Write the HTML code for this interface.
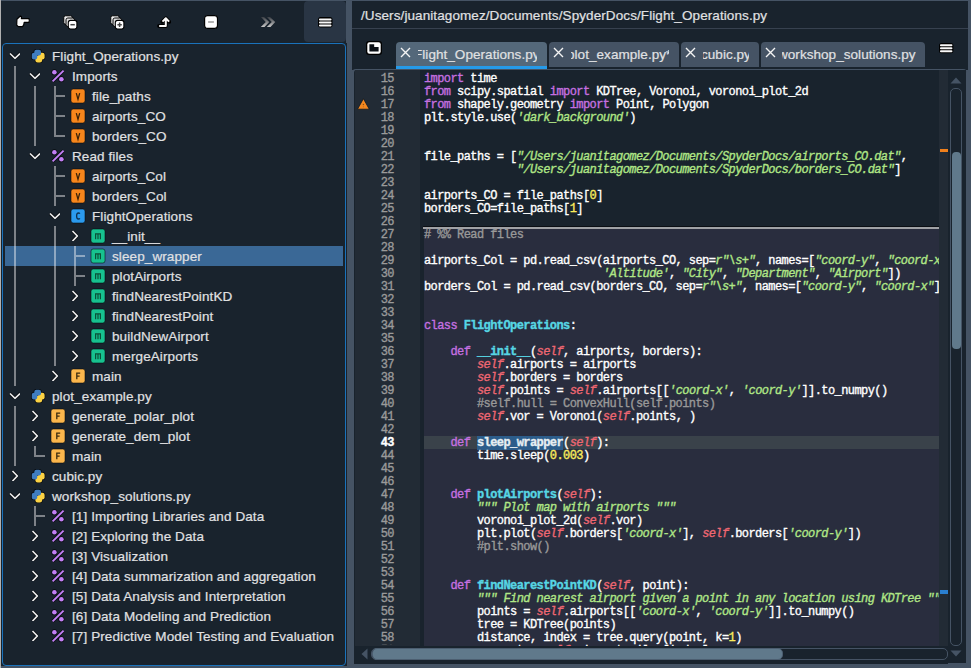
<!DOCTYPE html>
<html><head><meta charset="utf-8"><style>
*{margin:0;padding:0;box-sizing:border-box}
html,body{width:971px;height:668px;overflow:hidden;background:#455364}
.abs{position:absolute}
.abs svg,.tab svg{display:block}
.tt{position:absolute;font:13.5px/21px "Liberation Sans",sans-serif;letter-spacing:0.1px;-webkit-text-stroke:0.2px currentColor;color:#E0E1E3;white-space:pre}
.ln{position:absolute;left:424px;height:13px;font:12px/13px "Liberation Mono",monospace;letter-spacing:-0.58px;color:#ffffff;white-space:pre;padding-top:1px;-webkit-text-stroke:0.35px currentColor}
.gn{position:absolute;left:360px;width:34px;text-align:right;height:13px;font:12px/13px "Liberation Mono",monospace;letter-spacing:-0.58px;color:#9a9a9a;white-space:pre;padding-top:1px;-webkit-text-stroke:0.35px currentColor}
.gn.cur{color:#ffffff;font-weight:bold}
.k{color:#c670e0} .s{color:#b0e686;font-style:italic} .n{color:#faed5c} .i{color:#ee6772;font-style:italic}
.d{color:#57d6e4;font-weight:bold} .c{color:#999999}
.dsel{color:#e6eef2;font-weight:bold;background:#2c5d8b}
.tab{position:absolute;top:42px;height:27px;background:#455364;border-radius:4px 4px 0 0;overflow:hidden}
.tab .x{position:absolute;left:4px;top:4.5px}
.tab .lbl{position:absolute;top:0;height:27px;overflow:hidden;font:13.5px/26px "Liberation Sans",sans-serif;letter-spacing:0.05px;-webkit-text-stroke:0.2px currentColor;color:#E0E1E3;white-space:pre}
</style></head><body>
<!-- left edge -->
<div class="abs" style="left:0;top:0;width:1px;height:668px;background:#b0b0b0"></div>

<!-- ===== LEFT PANE ===== -->
<div class="abs" style="left:1px;top:1px;width:345px;height:42px;background:#19232D"></div>
<div class="abs" style="left:304px;top:1px;width:42px;height:41px;background:#293544;border-radius:4px"></div>

<!-- toolbar icons -->
<div class="abs" style="left:15px;top:15px;width:16px;height:13px">
<svg width="16" height="13" viewBox="0 0 16 13"><path d="M1.9 4.2 L5.3 1 L6.4 1.6 L6.4 3.6 L13.9 3.6 Q14.9 5.5 13.9 7.4 L9.2 7.4 L8.8 9.6 L7.6 11.6 L3.4 11.6 L1.7 10.2 Z" fill="#fafafa" stroke="#000" stroke-width="1.2" stroke-linejoin="round"/></svg></div>

<div class="abs" style="left:63px;top:15px;width:15px;height:15px">
<svg width="15" height="15" viewBox="0 0 15 15">
<rect x="0.8" y="0.8" width="8.5" height="8.5" rx="1.8" fill="#f2f2f2" stroke="#000" stroke-width="1"/>
<rect x="3" y="3" width="8.5" height="8.5" rx="1.8" fill="#dcdcdc" stroke="#000" stroke-width="1"/>
<rect x="5.3" y="5.4" width="8.6" height="8.6" rx="2.2" fill="#fff" stroke="#000" stroke-width="1.1"/>
<path d="M7.4 9.7 H11.8" stroke="#444" stroke-width="1.5"/></svg></div>

<div class="abs" style="left:110px;top:15px;width:15px;height:15px">
<svg width="15" height="15" viewBox="0 0 15 15">
<rect x="0.8" y="0.8" width="8.5" height="8.5" rx="1.8" fill="#f2f2f2" stroke="#000" stroke-width="1"/>
<rect x="3" y="3" width="8.5" height="8.5" rx="1.8" fill="#dcdcdc" stroke="#000" stroke-width="1"/>
<rect x="5.3" y="5.4" width="8.6" height="8.6" rx="2.2" fill="#fff" stroke="#000" stroke-width="1.1"/>
<path d="M7.4 9.7 H11.8 M9.6 7.5 V11.9" stroke="#444" stroke-width="1.5"/></svg></div>

<div class="abs" style="left:157px;top:16px;width:14px;height:13px">
<svg width="14" height="13" viewBox="0 0 14 13"><path d="M2 10 H8.8 V3.5 M5.3 5.8 L8.8 2.2 L12.3 5.8" stroke="#000" stroke-width="3.8" fill="none" stroke-linejoin="round" stroke-linecap="round"/><path d="M2.2 10 H8.8 V3.5 M5.5 5.6 L8.8 2.3 L12.1 5.6" stroke="#fafafa" stroke-width="2" fill="none" stroke-linejoin="round"/></svg></div>

<div class="abs" style="left:204px;top:15px;width:14px;height:14px">
<svg width="14" height="14" viewBox="0 0 14 14"><rect x="0.6" y="0.6" width="12.9" height="12.8" rx="2.8" fill="#fff" stroke="#000" stroke-width="1.2"/><path d="M4.1 7 H9.9" stroke="#9a9a9a" stroke-width="1.5"/></svg></div>

<div class="abs" style="left:260px;top:16px;width:17px;height:12px">
<svg width="17" height="12" viewBox="0 0 17 12"><defs><linearGradient id="gg" x1="0" y1="0" x2="0" y2="1"><stop offset="0" stop-color="#3a3e44"/><stop offset="1" stop-color="#c8c8c8"/></linearGradient></defs>
<path d="M1 1 H4 L9.2 6 L4.5 11 H0.8 L5.8 6 Z M7 1 H10 L15.2 6 L10.5 11 H6.8 L11.8 6 Z" fill="url(#gg)"/></svg></div>

<div class="abs" style="left:317.5px;top:16.5px;width:15px;height:11px">
<svg width="15" height="11" viewBox="0 0 15 11"><rect x="0" y="0" width="14.5" height="10.5" rx="2.5" fill="#000"/><path d="M1.9 2.5 H12.6 M1.9 5.5 H12.6 M1.9 8.5 H12.6" stroke="#fafafa" stroke-width="1.9" stroke-linecap="round"/></svg></div>

<!-- outline frame -->
<div class="abs" style="left:1px;top:43px;width:346px;height:623px;background:#19232D"></div>
<div class="abs" style="left:2px;top:43px;width:344px;height:623px;background:#19232D;border:1px solid #1A72BB;border-radius:4px"></div>
<div class="abs" style="left:5px;top:246px;width:338px;height:20px;background:#3a6896"></div>
<div class="abs" style="left:9px;top:52px;width:12px;height:8px"><svg width="12" height="8" viewBox="-1 -1 12 8" style="margin:-1px"><path d="M1 1.5 L6 6.3 L11 1.5" stroke="rgba(3,5,8,0.85)" stroke-width="3.2" fill="none"/><path d="M1 1.5 L6 6.3 L11 1.5" stroke="#ececec" stroke-width="1.7" fill="none"/></svg></div>
<div class="abs" style="left:30px;top:48px;width:16px;height:16px"><svg width="16" height="16" viewBox="0 0 16 16"><g fill="#070b10" stroke="#070b10" stroke-width="1.4"><rect x="4.3" y="1.8" width="6.7" height="5.6" rx="2"/><rect x="1.8" y="4.8" width="5.4" height="6.6" rx="2"/><rect x="5.4" y="7.7" width="6.7" height="6.7" rx="2.2"/><rect x="8.2" y="4.8" width="6.4" height="6.6" rx="2.2"/></g><g fill="#fbd244"><rect x="5.4" y="7.7" width="6.7" height="6.7" rx="2.2"/><rect x="8.2" y="4.8" width="6.4" height="6.6" rx="2.2"/></g><g fill="#3f7dc0"><rect x="4.3" y="1.8" width="6.7" height="5.6" rx="2"/><rect x="1.8" y="4.8" width="5.4" height="6.6" rx="2"/></g></svg></div>
<div class="tt" style="left:52px;top:46px">Flight_Operations.py</div>
<div class="abs" style="left:29px;top:72px;width:12px;height:8px"><svg width="12" height="8" viewBox="-1 -1 12 8" style="margin:-1px"><path d="M1 1.5 L6 6.3 L11 1.5" stroke="rgba(3,5,8,0.85)" stroke-width="3.2" fill="none"/><path d="M1 1.5 L6 6.3 L11 1.5" stroke="#ececec" stroke-width="1.7" fill="none"/></svg></div>
<div class="abs" style="left:50px;top:68px;width:16px;height:16px"><svg width="16" height="16" viewBox="0 0 16 16"><g stroke="rgba(3,5,8,0.8)" stroke-width="1.4" fill="rgba(3,5,8,0.8)"><circle cx="4.4" cy="4.3" r="2.3"/><circle cx="11.4" cy="11.3" r="2.3"/></g><path d="M2.6 13.4 L13.6 2.6" stroke="rgba(3,5,8,0.8)" stroke-width="3.4"/><circle cx="4.4" cy="4.3" r="2.3" fill="#c27ff5"/><circle cx="11.4" cy="11.3" r="2.3" fill="#c27ff5"/><path d="M2.6 13.4 L13.6 2.6" stroke="#c27ff5" stroke-width="2"/></svg></div>
<div class="tt" style="left:72px;top:66px">Imports</div>
<div class="abs" style="left:54.4px;top:86px;width:1.4px;height:20px;background:#7e8288"></div>
<div class="abs" style="left:54.4px;top:95.2px;width:10.6px;height:1.4px;background:#7e8288"></div>
<div class="abs" style="left:70px;top:88px;width:16px;height:16px"><svg width="16" height="16" viewBox="0 0 16 16"><rect x="1" y="1" width="14" height="14" rx="2.2" fill="#F7861C" stroke="rgba(5,8,12,0.6)" stroke-width="0.9"/><path d="M6.3 5.2 L8 11.4 L9.7 5.2" stroke="#3a2208" stroke-width="1.3" fill="none"/></svg></div>
<div class="tt" style="left:92px;top:86px">file_paths</div>
<div class="abs" style="left:54.4px;top:106px;width:1.4px;height:20px;background:#7e8288"></div>
<div class="abs" style="left:54.4px;top:115.2px;width:10.6px;height:1.4px;background:#7e8288"></div>
<div class="abs" style="left:70px;top:108px;width:16px;height:16px"><svg width="16" height="16" viewBox="0 0 16 16"><rect x="1" y="1" width="14" height="14" rx="2.2" fill="#F7861C" stroke="rgba(5,8,12,0.6)" stroke-width="0.9"/><path d="M6.3 5.2 L8 11.4 L9.7 5.2" stroke="#3a2208" stroke-width="1.3" fill="none"/></svg></div>
<div class="tt" style="left:92px;top:106px">airports_CO</div>
<div class="abs" style="left:54.4px;top:126px;width:1.4px;height:10px;background:#7e8288"></div>
<div class="abs" style="left:54.4px;top:135.2px;width:10.6px;height:1.4px;background:#7e8288"></div>
<div class="abs" style="left:70px;top:128px;width:16px;height:16px"><svg width="16" height="16" viewBox="0 0 16 16"><rect x="1" y="1" width="14" height="14" rx="2.2" fill="#F7861C" stroke="rgba(5,8,12,0.6)" stroke-width="0.9"/><path d="M6.3 5.2 L8 11.4 L9.7 5.2" stroke="#3a2208" stroke-width="1.3" fill="none"/></svg></div>
<div class="tt" style="left:92px;top:126px">borders_CO</div>
<div class="abs" style="left:29px;top:152px;width:12px;height:8px"><svg width="12" height="8" viewBox="-1 -1 12 8" style="margin:-1px"><path d="M1 1.5 L6 6.3 L11 1.5" stroke="rgba(3,5,8,0.85)" stroke-width="3.2" fill="none"/><path d="M1 1.5 L6 6.3 L11 1.5" stroke="#ececec" stroke-width="1.7" fill="none"/></svg></div>
<div class="abs" style="left:50px;top:148px;width:16px;height:16px"><svg width="16" height="16" viewBox="0 0 16 16"><g stroke="rgba(3,5,8,0.8)" stroke-width="1.4" fill="rgba(3,5,8,0.8)"><circle cx="4.4" cy="4.3" r="2.3"/><circle cx="11.4" cy="11.3" r="2.3"/></g><path d="M2.6 13.4 L13.6 2.6" stroke="rgba(3,5,8,0.8)" stroke-width="3.4"/><circle cx="4.4" cy="4.3" r="2.3" fill="#c27ff5"/><circle cx="11.4" cy="11.3" r="2.3" fill="#c27ff5"/><path d="M2.6 13.4 L13.6 2.6" stroke="#c27ff5" stroke-width="2"/></svg></div>
<div class="tt" style="left:72px;top:146px">Read files</div>
<div class="abs" style="left:54.4px;top:166px;width:1.4px;height:20px;background:#7e8288"></div>
<div class="abs" style="left:54.4px;top:175.2px;width:10.6px;height:1.4px;background:#7e8288"></div>
<div class="abs" style="left:70px;top:168px;width:16px;height:16px"><svg width="16" height="16" viewBox="0 0 16 16"><rect x="1" y="1" width="14" height="14" rx="2.2" fill="#F7861C" stroke="rgba(5,8,12,0.6)" stroke-width="0.9"/><path d="M6.3 5.2 L8 11.4 L9.7 5.2" stroke="#3a2208" stroke-width="1.3" fill="none"/></svg></div>
<div class="tt" style="left:92px;top:166px">airports_Col</div>
<div class="abs" style="left:54.4px;top:186px;width:1.4px;height:20px;background:#7e8288"></div>
<div class="abs" style="left:54.4px;top:195.2px;width:10.6px;height:1.4px;background:#7e8288"></div>
<div class="abs" style="left:70px;top:188px;width:16px;height:16px"><svg width="16" height="16" viewBox="0 0 16 16"><rect x="1" y="1" width="14" height="14" rx="2.2" fill="#F7861C" stroke="rgba(5,8,12,0.6)" stroke-width="0.9"/><path d="M6.3 5.2 L8 11.4 L9.7 5.2" stroke="#3a2208" stroke-width="1.3" fill="none"/></svg></div>
<div class="tt" style="left:92px;top:186px">borders_Col</div>
<div class="abs" style="left:49px;top:212px;width:12px;height:8px"><svg width="12" height="8" viewBox="-1 -1 12 8" style="margin:-1px"><path d="M1 1.5 L6 6.3 L11 1.5" stroke="rgba(3,5,8,0.85)" stroke-width="3.2" fill="none"/><path d="M1 1.5 L6 6.3 L11 1.5" stroke="#ececec" stroke-width="1.7" fill="none"/></svg></div>
<div class="abs" style="left:70px;top:208px;width:16px;height:16px"><svg width="16" height="16" viewBox="0 0 16 16"><rect x="1" y="1" width="14" height="14" rx="2.2" fill="#2B9AEE" stroke="rgba(5,8,12,0.6)" stroke-width="0.9"/><path d="M9.9 5.6 C9.5 5.1 9 5 8.4 5 C7.2 5 6.6 6 6.6 8 C6.6 10 7.2 11 8.4 11 C9 11 9.5 10.9 9.9 10.4" stroke="#0f3050" stroke-width="1.3" fill="none"/></svg></div>
<div class="tt" style="left:92px;top:206px">FlightOperations</div>
<div class="abs" style="left:71px;top:230px;width:8px;height:12px"><svg width="8" height="12" viewBox="-1 -1 8 12" style="margin:-1px"><path d="M1.5 1 L6.3 6 L1.5 11" stroke="rgba(3,5,8,0.85)" stroke-width="3.2" fill="none"/><path d="M1.5 1 L6.3 6 L1.5 11" stroke="#ececec" stroke-width="1.7" fill="none"/></svg></div>
<div class="abs" style="left:90px;top:228px;width:16px;height:16px"><svg width="16" height="16" viewBox="0 0 16 16"><rect x="1" y="1" width="14" height="14" rx="2.2" fill="#17C28F" stroke="rgba(5,8,12,0.6)" stroke-width="0.9"/><path d="M5.6 11.2 V5.8 H10.4 V11.2 M8 5.8 V11.2" stroke="#0b5038" stroke-width="1.2" fill="none"/></svg></div>
<div class="tt" style="left:112px;top:226px">__init__</div>
<div class="abs" style="left:74.4px;top:246px;width:1.4px;height:20px;background:#7e8288"></div>
<div class="abs" style="left:74.4px;top:255.2px;width:10.6px;height:1.4px;background:#7e8288"></div>
<div class="abs" style="left:90px;top:248px;width:16px;height:16px"><svg width="16" height="16" viewBox="0 0 16 16"><rect x="1" y="1" width="14" height="14" rx="2.2" fill="#17C28F" stroke="rgba(5,8,12,0.6)" stroke-width="0.9"/><path d="M5.6 11.2 V5.8 H10.4 V11.2 M8 5.8 V11.2" stroke="#0b5038" stroke-width="1.2" fill="none"/></svg></div>
<div class="tt" style="left:112px;top:246px">sleep_wrapper</div>
<div class="abs" style="left:74.4px;top:266px;width:1.4px;height:20px;background:#7e8288"></div>
<div class="abs" style="left:74.4px;top:275.2px;width:10.6px;height:1.4px;background:#7e8288"></div>
<div class="abs" style="left:90px;top:268px;width:16px;height:16px"><svg width="16" height="16" viewBox="0 0 16 16"><rect x="1" y="1" width="14" height="14" rx="2.2" fill="#17C28F" stroke="rgba(5,8,12,0.6)" stroke-width="0.9"/><path d="M5.6 11.2 V5.8 H10.4 V11.2 M8 5.8 V11.2" stroke="#0b5038" stroke-width="1.2" fill="none"/></svg></div>
<div class="tt" style="left:112px;top:266px">plotAirports</div>
<div class="abs" style="left:71px;top:290px;width:8px;height:12px"><svg width="8" height="12" viewBox="-1 -1 8 12" style="margin:-1px"><path d="M1.5 1 L6.3 6 L1.5 11" stroke="rgba(3,5,8,0.85)" stroke-width="3.2" fill="none"/><path d="M1.5 1 L6.3 6 L1.5 11" stroke="#ececec" stroke-width="1.7" fill="none"/></svg></div>
<div class="abs" style="left:90px;top:288px;width:16px;height:16px"><svg width="16" height="16" viewBox="0 0 16 16"><rect x="1" y="1" width="14" height="14" rx="2.2" fill="#17C28F" stroke="rgba(5,8,12,0.6)" stroke-width="0.9"/><path d="M5.6 11.2 V5.8 H10.4 V11.2 M8 5.8 V11.2" stroke="#0b5038" stroke-width="1.2" fill="none"/></svg></div>
<div class="tt" style="left:112px;top:286px">findNearestPointKD</div>
<div class="abs" style="left:71px;top:310px;width:8px;height:12px"><svg width="8" height="12" viewBox="-1 -1 8 12" style="margin:-1px"><path d="M1.5 1 L6.3 6 L1.5 11" stroke="rgba(3,5,8,0.85)" stroke-width="3.2" fill="none"/><path d="M1.5 1 L6.3 6 L1.5 11" stroke="#ececec" stroke-width="1.7" fill="none"/></svg></div>
<div class="abs" style="left:90px;top:308px;width:16px;height:16px"><svg width="16" height="16" viewBox="0 0 16 16"><rect x="1" y="1" width="14" height="14" rx="2.2" fill="#17C28F" stroke="rgba(5,8,12,0.6)" stroke-width="0.9"/><path d="M5.6 11.2 V5.8 H10.4 V11.2 M8 5.8 V11.2" stroke="#0b5038" stroke-width="1.2" fill="none"/></svg></div>
<div class="tt" style="left:112px;top:306px">findNearestPoint</div>
<div class="abs" style="left:71px;top:330px;width:8px;height:12px"><svg width="8" height="12" viewBox="-1 -1 8 12" style="margin:-1px"><path d="M1.5 1 L6.3 6 L1.5 11" stroke="rgba(3,5,8,0.85)" stroke-width="3.2" fill="none"/><path d="M1.5 1 L6.3 6 L1.5 11" stroke="#ececec" stroke-width="1.7" fill="none"/></svg></div>
<div class="abs" style="left:90px;top:328px;width:16px;height:16px"><svg width="16" height="16" viewBox="0 0 16 16"><rect x="1" y="1" width="14" height="14" rx="2.2" fill="#17C28F" stroke="rgba(5,8,12,0.6)" stroke-width="0.9"/><path d="M5.6 11.2 V5.8 H10.4 V11.2 M8 5.8 V11.2" stroke="#0b5038" stroke-width="1.2" fill="none"/></svg></div>
<div class="tt" style="left:112px;top:326px">buildNewAirport</div>
<div class="abs" style="left:71px;top:350px;width:8px;height:12px"><svg width="8" height="12" viewBox="-1 -1 8 12" style="margin:-1px"><path d="M1.5 1 L6.3 6 L1.5 11" stroke="rgba(3,5,8,0.85)" stroke-width="3.2" fill="none"/><path d="M1.5 1 L6.3 6 L1.5 11" stroke="#ececec" stroke-width="1.7" fill="none"/></svg></div>
<div class="abs" style="left:90px;top:348px;width:16px;height:16px"><svg width="16" height="16" viewBox="0 0 16 16"><rect x="1" y="1" width="14" height="14" rx="2.2" fill="#17C28F" stroke="rgba(5,8,12,0.6)" stroke-width="0.9"/><path d="M5.6 11.2 V5.8 H10.4 V11.2 M8 5.8 V11.2" stroke="#0b5038" stroke-width="1.2" fill="none"/></svg></div>
<div class="tt" style="left:112px;top:346px">mergeAirports</div>
<div class="abs" style="left:51px;top:370px;width:8px;height:12px"><svg width="8" height="12" viewBox="-1 -1 8 12" style="margin:-1px"><path d="M1.5 1 L6.3 6 L1.5 11" stroke="rgba(3,5,8,0.85)" stroke-width="3.2" fill="none"/><path d="M1.5 1 L6.3 6 L1.5 11" stroke="#ececec" stroke-width="1.7" fill="none"/></svg></div>
<div class="abs" style="left:70px;top:368px;width:16px;height:16px"><svg width="16" height="16" viewBox="0 0 16 16"><rect x="1" y="1" width="14" height="14" rx="2.2" fill="#FBB64C" stroke="rgba(5,8,12,0.6)" stroke-width="0.9"/><path d="M6.8 11.2 V5.2 H10.2 M6.8 8.1 H9.6" stroke="#3a2a10" stroke-width="1.3" fill="none"/></svg></div>
<div class="tt" style="left:92px;top:366px">main</div>
<div class="abs" style="left:9px;top:392px;width:12px;height:8px"><svg width="12" height="8" viewBox="-1 -1 12 8" style="margin:-1px"><path d="M1 1.5 L6 6.3 L11 1.5" stroke="rgba(3,5,8,0.85)" stroke-width="3.2" fill="none"/><path d="M1 1.5 L6 6.3 L11 1.5" stroke="#ececec" stroke-width="1.7" fill="none"/></svg></div>
<div class="abs" style="left:30px;top:388px;width:16px;height:16px"><svg width="16" height="16" viewBox="0 0 16 16"><g fill="#070b10" stroke="#070b10" stroke-width="1.4"><rect x="4.3" y="1.8" width="6.7" height="5.6" rx="2"/><rect x="1.8" y="4.8" width="5.4" height="6.6" rx="2"/><rect x="5.4" y="7.7" width="6.7" height="6.7" rx="2.2"/><rect x="8.2" y="4.8" width="6.4" height="6.6" rx="2.2"/></g><g fill="#fbd244"><rect x="5.4" y="7.7" width="6.7" height="6.7" rx="2.2"/><rect x="8.2" y="4.8" width="6.4" height="6.6" rx="2.2"/></g><g fill="#3f7dc0"><rect x="4.3" y="1.8" width="6.7" height="5.6" rx="2"/><rect x="1.8" y="4.8" width="5.4" height="6.6" rx="2"/></g></svg></div>
<div class="tt" style="left:52px;top:386px">plot_example.py</div>
<div class="abs" style="left:31px;top:410px;width:8px;height:12px"><svg width="8" height="12" viewBox="-1 -1 8 12" style="margin:-1px"><path d="M1.5 1 L6.3 6 L1.5 11" stroke="rgba(3,5,8,0.85)" stroke-width="3.2" fill="none"/><path d="M1.5 1 L6.3 6 L1.5 11" stroke="#ececec" stroke-width="1.7" fill="none"/></svg></div>
<div class="abs" style="left:50px;top:408px;width:16px;height:16px"><svg width="16" height="16" viewBox="0 0 16 16"><rect x="1" y="1" width="14" height="14" rx="2.2" fill="#FBB64C" stroke="rgba(5,8,12,0.6)" stroke-width="0.9"/><path d="M6.8 11.2 V5.2 H10.2 M6.8 8.1 H9.6" stroke="#3a2a10" stroke-width="1.3" fill="none"/></svg></div>
<div class="tt" style="left:72px;top:406px">generate_polar_plot</div>
<div class="abs" style="left:31px;top:430px;width:8px;height:12px"><svg width="8" height="12" viewBox="-1 -1 8 12" style="margin:-1px"><path d="M1.5 1 L6.3 6 L1.5 11" stroke="rgba(3,5,8,0.85)" stroke-width="3.2" fill="none"/><path d="M1.5 1 L6.3 6 L1.5 11" stroke="#ececec" stroke-width="1.7" fill="none"/></svg></div>
<div class="abs" style="left:50px;top:428px;width:16px;height:16px"><svg width="16" height="16" viewBox="0 0 16 16"><rect x="1" y="1" width="14" height="14" rx="2.2" fill="#FBB64C" stroke="rgba(5,8,12,0.6)" stroke-width="0.9"/><path d="M6.8 11.2 V5.2 H10.2 M6.8 8.1 H9.6" stroke="#3a2a10" stroke-width="1.3" fill="none"/></svg></div>
<div class="tt" style="left:72px;top:426px">generate_dem_plot</div>
<div class="abs" style="left:34.4px;top:446px;width:1.4px;height:10px;background:#7e8288"></div>
<div class="abs" style="left:34.4px;top:455.2px;width:10.6px;height:1.4px;background:#7e8288"></div>
<div class="abs" style="left:50px;top:448px;width:16px;height:16px"><svg width="16" height="16" viewBox="0 0 16 16"><rect x="1" y="1" width="14" height="14" rx="2.2" fill="#FBB64C" stroke="rgba(5,8,12,0.6)" stroke-width="0.9"/><path d="M6.8 11.2 V5.2 H10.2 M6.8 8.1 H9.6" stroke="#3a2a10" stroke-width="1.3" fill="none"/></svg></div>
<div class="tt" style="left:72px;top:446px">main</div>
<div class="abs" style="left:11px;top:470px;width:8px;height:12px"><svg width="8" height="12" viewBox="-1 -1 8 12" style="margin:-1px"><path d="M1.5 1 L6.3 6 L1.5 11" stroke="rgba(3,5,8,0.85)" stroke-width="3.2" fill="none"/><path d="M1.5 1 L6.3 6 L1.5 11" stroke="#ececec" stroke-width="1.7" fill="none"/></svg></div>
<div class="abs" style="left:30px;top:468px;width:16px;height:16px"><svg width="16" height="16" viewBox="0 0 16 16"><g fill="#070b10" stroke="#070b10" stroke-width="1.4"><rect x="4.3" y="1.8" width="6.7" height="5.6" rx="2"/><rect x="1.8" y="4.8" width="5.4" height="6.6" rx="2"/><rect x="5.4" y="7.7" width="6.7" height="6.7" rx="2.2"/><rect x="8.2" y="4.8" width="6.4" height="6.6" rx="2.2"/></g><g fill="#fbd244"><rect x="5.4" y="7.7" width="6.7" height="6.7" rx="2.2"/><rect x="8.2" y="4.8" width="6.4" height="6.6" rx="2.2"/></g><g fill="#3f7dc0"><rect x="4.3" y="1.8" width="6.7" height="5.6" rx="2"/><rect x="1.8" y="4.8" width="5.4" height="6.6" rx="2"/></g></svg></div>
<div class="tt" style="left:52px;top:466px">cubic.py</div>
<div class="abs" style="left:9px;top:492px;width:12px;height:8px"><svg width="12" height="8" viewBox="-1 -1 12 8" style="margin:-1px"><path d="M1 1.5 L6 6.3 L11 1.5" stroke="rgba(3,5,8,0.85)" stroke-width="3.2" fill="none"/><path d="M1 1.5 L6 6.3 L11 1.5" stroke="#ececec" stroke-width="1.7" fill="none"/></svg></div>
<div class="abs" style="left:30px;top:488px;width:16px;height:16px"><svg width="16" height="16" viewBox="0 0 16 16"><g fill="#070b10" stroke="#070b10" stroke-width="1.4"><rect x="4.3" y="1.8" width="6.7" height="5.6" rx="2"/><rect x="1.8" y="4.8" width="5.4" height="6.6" rx="2"/><rect x="5.4" y="7.7" width="6.7" height="6.7" rx="2.2"/><rect x="8.2" y="4.8" width="6.4" height="6.6" rx="2.2"/></g><g fill="#fbd244"><rect x="5.4" y="7.7" width="6.7" height="6.7" rx="2.2"/><rect x="8.2" y="4.8" width="6.4" height="6.6" rx="2.2"/></g><g fill="#3f7dc0"><rect x="4.3" y="1.8" width="6.7" height="5.6" rx="2"/><rect x="1.8" y="4.8" width="5.4" height="6.6" rx="2"/></g></svg></div>
<div class="tt" style="left:52px;top:486px">workshop_solutions.py</div>
<div class="abs" style="left:34.4px;top:506px;width:1.4px;height:20px;background:#7e8288"></div>
<div class="abs" style="left:34.4px;top:515.2px;width:10.6px;height:1.4px;background:#7e8288"></div>
<div class="abs" style="left:50px;top:508px;width:16px;height:16px"><svg width="16" height="16" viewBox="0 0 16 16"><g stroke="rgba(3,5,8,0.8)" stroke-width="1.4" fill="rgba(3,5,8,0.8)"><circle cx="4.4" cy="4.3" r="2.3"/><circle cx="11.4" cy="11.3" r="2.3"/></g><path d="M2.6 13.4 L13.6 2.6" stroke="rgba(3,5,8,0.8)" stroke-width="3.4"/><circle cx="4.4" cy="4.3" r="2.3" fill="#c27ff5"/><circle cx="11.4" cy="11.3" r="2.3" fill="#c27ff5"/><path d="M2.6 13.4 L13.6 2.6" stroke="#c27ff5" stroke-width="2"/></svg></div>
<div class="tt" style="left:72px;top:506px">[1] Importing Libraries and Data</div>
<div class="abs" style="left:31px;top:530px;width:8px;height:12px"><svg width="8" height="12" viewBox="-1 -1 8 12" style="margin:-1px"><path d="M1.5 1 L6.3 6 L1.5 11" stroke="rgba(3,5,8,0.85)" stroke-width="3.2" fill="none"/><path d="M1.5 1 L6.3 6 L1.5 11" stroke="#ececec" stroke-width="1.7" fill="none"/></svg></div>
<div class="abs" style="left:50px;top:528px;width:16px;height:16px"><svg width="16" height="16" viewBox="0 0 16 16"><g stroke="rgba(3,5,8,0.8)" stroke-width="1.4" fill="rgba(3,5,8,0.8)"><circle cx="4.4" cy="4.3" r="2.3"/><circle cx="11.4" cy="11.3" r="2.3"/></g><path d="M2.6 13.4 L13.6 2.6" stroke="rgba(3,5,8,0.8)" stroke-width="3.4"/><circle cx="4.4" cy="4.3" r="2.3" fill="#c27ff5"/><circle cx="11.4" cy="11.3" r="2.3" fill="#c27ff5"/><path d="M2.6 13.4 L13.6 2.6" stroke="#c27ff5" stroke-width="2"/></svg></div>
<div class="tt" style="left:72px;top:526px">[2] Exploring the Data</div>
<div class="abs" style="left:31px;top:550px;width:8px;height:12px"><svg width="8" height="12" viewBox="-1 -1 8 12" style="margin:-1px"><path d="M1.5 1 L6.3 6 L1.5 11" stroke="rgba(3,5,8,0.85)" stroke-width="3.2" fill="none"/><path d="M1.5 1 L6.3 6 L1.5 11" stroke="#ececec" stroke-width="1.7" fill="none"/></svg></div>
<div class="abs" style="left:50px;top:548px;width:16px;height:16px"><svg width="16" height="16" viewBox="0 0 16 16"><g stroke="rgba(3,5,8,0.8)" stroke-width="1.4" fill="rgba(3,5,8,0.8)"><circle cx="4.4" cy="4.3" r="2.3"/><circle cx="11.4" cy="11.3" r="2.3"/></g><path d="M2.6 13.4 L13.6 2.6" stroke="rgba(3,5,8,0.8)" stroke-width="3.4"/><circle cx="4.4" cy="4.3" r="2.3" fill="#c27ff5"/><circle cx="11.4" cy="11.3" r="2.3" fill="#c27ff5"/><path d="M2.6 13.4 L13.6 2.6" stroke="#c27ff5" stroke-width="2"/></svg></div>
<div class="tt" style="left:72px;top:546px">[3] Visualization</div>
<div class="abs" style="left:31px;top:570px;width:8px;height:12px"><svg width="8" height="12" viewBox="-1 -1 8 12" style="margin:-1px"><path d="M1.5 1 L6.3 6 L1.5 11" stroke="rgba(3,5,8,0.85)" stroke-width="3.2" fill="none"/><path d="M1.5 1 L6.3 6 L1.5 11" stroke="#ececec" stroke-width="1.7" fill="none"/></svg></div>
<div class="abs" style="left:50px;top:568px;width:16px;height:16px"><svg width="16" height="16" viewBox="0 0 16 16"><g stroke="rgba(3,5,8,0.8)" stroke-width="1.4" fill="rgba(3,5,8,0.8)"><circle cx="4.4" cy="4.3" r="2.3"/><circle cx="11.4" cy="11.3" r="2.3"/></g><path d="M2.6 13.4 L13.6 2.6" stroke="rgba(3,5,8,0.8)" stroke-width="3.4"/><circle cx="4.4" cy="4.3" r="2.3" fill="#c27ff5"/><circle cx="11.4" cy="11.3" r="2.3" fill="#c27ff5"/><path d="M2.6 13.4 L13.6 2.6" stroke="#c27ff5" stroke-width="2"/></svg></div>
<div class="tt" style="left:72px;top:566px">[4] Data summarization and aggregation</div>
<div class="abs" style="left:31px;top:590px;width:8px;height:12px"><svg width="8" height="12" viewBox="-1 -1 8 12" style="margin:-1px"><path d="M1.5 1 L6.3 6 L1.5 11" stroke="rgba(3,5,8,0.85)" stroke-width="3.2" fill="none"/><path d="M1.5 1 L6.3 6 L1.5 11" stroke="#ececec" stroke-width="1.7" fill="none"/></svg></div>
<div class="abs" style="left:50px;top:588px;width:16px;height:16px"><svg width="16" height="16" viewBox="0 0 16 16"><g stroke="rgba(3,5,8,0.8)" stroke-width="1.4" fill="rgba(3,5,8,0.8)"><circle cx="4.4" cy="4.3" r="2.3"/><circle cx="11.4" cy="11.3" r="2.3"/></g><path d="M2.6 13.4 L13.6 2.6" stroke="rgba(3,5,8,0.8)" stroke-width="3.4"/><circle cx="4.4" cy="4.3" r="2.3" fill="#c27ff5"/><circle cx="11.4" cy="11.3" r="2.3" fill="#c27ff5"/><path d="M2.6 13.4 L13.6 2.6" stroke="#c27ff5" stroke-width="2"/></svg></div>
<div class="tt" style="left:72px;top:586px">[5] Data Analysis and Interpretation</div>
<div class="abs" style="left:31px;top:610px;width:8px;height:12px"><svg width="8" height="12" viewBox="-1 -1 8 12" style="margin:-1px"><path d="M1.5 1 L6.3 6 L1.5 11" stroke="rgba(3,5,8,0.85)" stroke-width="3.2" fill="none"/><path d="M1.5 1 L6.3 6 L1.5 11" stroke="#ececec" stroke-width="1.7" fill="none"/></svg></div>
<div class="abs" style="left:50px;top:608px;width:16px;height:16px"><svg width="16" height="16" viewBox="0 0 16 16"><g stroke="rgba(3,5,8,0.8)" stroke-width="1.4" fill="rgba(3,5,8,0.8)"><circle cx="4.4" cy="4.3" r="2.3"/><circle cx="11.4" cy="11.3" r="2.3"/></g><path d="M2.6 13.4 L13.6 2.6" stroke="rgba(3,5,8,0.8)" stroke-width="3.4"/><circle cx="4.4" cy="4.3" r="2.3" fill="#c27ff5"/><circle cx="11.4" cy="11.3" r="2.3" fill="#c27ff5"/><path d="M2.6 13.4 L13.6 2.6" stroke="#c27ff5" stroke-width="2"/></svg></div>
<div class="tt" style="left:72px;top:606px">[6] Data Modeling and Prediction</div>
<div class="abs" style="left:31px;top:630px;width:8px;height:12px"><svg width="8" height="12" viewBox="-1 -1 8 12" style="margin:-1px"><path d="M1.5 1 L6.3 6 L1.5 11" stroke="rgba(3,5,8,0.85)" stroke-width="3.2" fill="none"/><path d="M1.5 1 L6.3 6 L1.5 11" stroke="#ececec" stroke-width="1.7" fill="none"/></svg></div>
<div class="abs" style="left:50px;top:628px;width:16px;height:16px"><svg width="16" height="16" viewBox="0 0 16 16"><g stroke="rgba(3,5,8,0.8)" stroke-width="1.4" fill="rgba(3,5,8,0.8)"><circle cx="4.4" cy="4.3" r="2.3"/><circle cx="11.4" cy="11.3" r="2.3"/></g><path d="M2.6 13.4 L13.6 2.6" stroke="rgba(3,5,8,0.8)" stroke-width="3.4"/><circle cx="4.4" cy="4.3" r="2.3" fill="#c27ff5"/><circle cx="11.4" cy="11.3" r="2.3" fill="#c27ff5"/><path d="M2.6 13.4 L13.6 2.6" stroke="#c27ff5" stroke-width="2"/></svg></div>
<div class="tt" style="left:72px;top:626px">[7] Predictive Model Testing and Evaluation</div>
<div class="abs" style="left:14.4px;top:66px;width:1.4px;height:320px;background:#7e8288"></div>
<div class="abs" style="left:34.4px;top:86px;width:1.4px;height:60px;background:#7e8288"></div>
<div class="abs" style="left:54.4px;top:226px;width:1.4px;height:140px;background:#7e8288"></div>
<div class="abs" style="left:14.4px;top:406px;width:1.4px;height:60px;background:#7e8288"></div>
<div class="abs" style="left:14.4px;top:246px;width:1.4px;height:20px;background:#8fa8c2"></div>
<div class="abs" style="left:54.4px;top:246px;width:1.4px;height:20px;background:#8fa8c2"></div>
<div class="abs" style="left:74.4px;top:246px;width:1.4px;height:20px;background:#8fa8c2"></div>
<div class="abs" style="left:74.4px;top:255.2px;width:10.6px;height:1.4px;background:#8fa8c2"></div>

<!-- ===== RIGHT PANE ===== -->
<div class="abs" style="left:352px;top:1px;width:616px;height:27px;background:#19232D"></div>
<div class="abs" style="left:352px;top:28px;width:616px;height:1px;background:#37414F"></div>
<div class="abs" style="left:361px;top:1px;font:13.5px/30px 'Liberation Sans',sans-serif;letter-spacing:0.09px;-webkit-text-stroke:0.2px currentColor;color:#E0E1E3;white-space:pre">/Users/juanitagomez/Documents/SpyderDocs/Flight_Operations.py</div>
<div class="abs" style="left:352px;top:29px;width:616px;height:41px;background:#19232D"></div>

<!-- browse tabs icon -->
<div class="abs" style="left:366px;top:41px;width:16px;height:14px">
<svg width="16" height="14" viewBox="0 0 16 14"><rect x="0" y="0" width="16" height="14" rx="3" fill="#000"/><rect x="1.3" y="1.3" width="13.4" height="11.4" rx="2.2" fill="#fff"/><path d="M3.4 3.3 H8.2 V6.1 H12.6 V10.6 H3.4 Z" fill="#0b1016"/></svg></div>

<!-- tabs -->
<div class="tab" style="left:396px;width:151px;background:#54687A">
  <div class="x"><svg width="11" height="11" viewBox="0 0 11 11"><path d="M1 1 L10 10 M10 1 L1 10" stroke="#f4f4f4" stroke-width="1.4"/></svg></div>
  <div class="lbl" style="left:22px;width:119px"><span style="position:relative;left:-4px">Flight_Operations.py</span></div>
  <div class="abs" style="left:0;top:24px;width:151px;height:3px;background:#259AE9"></div>
</div>
<div class="tab" style="left:549px;width:130px;height:25px">
  <div class="x"><svg width="11" height="11" viewBox="0 0 11 11"><path d="M1 1 L10 10 M10 1 L1 10" stroke="#f4f4f4" stroke-width="1.4"/></svg></div>
  <div class="lbl" style="left:22px;width:98px"><span style="position:relative;left:-4px">plot_example.py*</span></div>
</div>
<div class="tab" style="left:681px;width:78px;height:25px">
  <div class="x"><svg width="11" height="11" viewBox="0 0 11 11"><path d="M1 1 L10 10 M10 1 L1 10" stroke="#f4f4f4" stroke-width="1.4"/></svg></div>
  <div class="lbl" style="left:22px;width:46px"><span style="position:relative;left:-2px">cubic.py</span></div>
</div>
<div class="tab" style="left:761px;width:164px;height:25px">
  <div class="x"><svg width="11" height="11" viewBox="0 0 11 11"><path d="M1 1 L10 10 M10 1 L1 10" stroke="#f4f4f4" stroke-width="1.4"/></svg></div>
  <div class="lbl" style="left:21px;width:134px"><span style="position:relative;left:-4px">workshop_solutions.py</span></div>
</div>
<div class="abs" style="left:938.7px;top:42.8px;width:15px;height:11px">
<svg width="15" height="11" viewBox="0 0 15 11"><rect x="0" y="0" width="14.4" height="10.2" rx="2.5" fill="#000"/><path d="M1.9 2.2 H12.5 M1.9 5.2 H12.5 M1.9 8.2 H12.5" stroke="#fafafa" stroke-width="1.9" stroke-linecap="round"/></svg></div>

<!-- editor frame -->
<div class="abs" style="left:352px;top:69px;width:615px;height:595px;background:#19232D;border:1px solid #455364;border-left-width:2px;border-radius:4px 4px 0 0;overflow:hidden">
</div>
<div class="abs" style="left:355px;top:70px;width:65px;height:577px;background:#222b35"></div>
<div class="abs" style="left:424px;top:228px;width:515px;height:419px;background:#292d3e"></div>
<div class="abs" style="left:423px;top:226px;width:516px;height:1px;background:#0b0f14"></div>
<div class="abs" style="left:423px;top:227px;width:516px;height:2px;background:#a0a2a6"></div>
<div class="abs" style="left:424px;top:436px;width:515px;height:13px;background:#3a424a"></div>
<div class="abs" style="left:939px;top:70px;width:9px;height:577px;background:#222b35"></div>
<div class="abs" style="left:940px;top:149px;width:8px;height:3px;background:#f0801c"></div>
<div class="abs" style="left:940px;top:590px;width:8px;height:3.5px;background:#2a7fd0"></div>

<!-- warning -->
<div class="abs" style="left:357px;top:98px;width:13px;height:12px">
<svg width="13" height="12" viewBox="0 0 13 12"><path d="M6.4 0.7 L12.3 11.2 H0.5 Z" fill="#f5881f" stroke="#0d1a26" stroke-width="0.8" stroke-linejoin="round"/><circle cx="6.4" cy="6.4" r="0.7" fill="#8a5015"/><path d="M6.4 7.6 V9.4" stroke="#c06a18" stroke-width="0.7"/></svg></div>

<!-- code -->
<div class="abs" style="left:0;top:0;width:420px;height:645px;overflow:hidden">
<div class="gn" style="top:72px">15</div>
<div class="gn" style="top:85px">16</div>
<div class="gn" style="top:98px">17</div>
<div class="gn" style="top:111px">18</div>
<div class="gn" style="top:124px">19</div>
<div class="gn" style="top:137px">20</div>
<div class="gn" style="top:150px">21</div>
<div class="gn" style="top:163px">22</div>
<div class="gn" style="top:176px">23</div>
<div class="gn" style="top:189px">24</div>
<div class="gn" style="top:202px">25</div>
<div class="gn" style="top:215px">26</div>
<div class="gn" style="top:228px">27</div>
<div class="gn" style="top:241px">28</div>
<div class="gn" style="top:254px">29</div>
<div class="gn" style="top:267px">30</div>
<div class="gn" style="top:280px">31</div>
<div class="gn" style="top:293px">32</div>
<div class="gn" style="top:306px">33</div>
<div class="gn" style="top:319px">34</div>
<div class="gn" style="top:332px">35</div>
<div class="gn" style="top:345px">36</div>
<div class="gn" style="top:358px">37</div>
<div class="gn" style="top:371px">38</div>
<div class="gn" style="top:384px">39</div>
<div class="gn" style="top:397px">40</div>
<div class="gn" style="top:410px">41</div>
<div class="gn" style="top:423px">42</div>
<div class="gn cur" style="top:436px">43</div>
<div class="gn" style="top:449px">44</div>
<div class="gn" style="top:462px">45</div>
<div class="gn" style="top:475px">46</div>
<div class="gn" style="top:488px">47</div>
<div class="gn" style="top:501px">48</div>
<div class="gn" style="top:514px">49</div>
<div class="gn" style="top:527px">50</div>
<div class="gn" style="top:540px">51</div>
<div class="gn" style="top:553px">52</div>
<div class="gn" style="top:566px">53</div>
<div class="gn" style="top:579px">54</div>
<div class="gn" style="top:592px">55</div>
<div class="gn" style="top:605px">56</div>
<div class="gn" style="top:618px">57</div>
<div class="gn" style="top:631px">58</div>
<div class="gn" style="top:644px">59</div>
</div>
<div class="abs" style="left:0;top:0;width:939px;height:646px;overflow:hidden">
<div class="ln" style="top:72px"><span class="k">import</span> time</div>
<div class="ln" style="top:85px"><span class="k">from</span> scipy.spatial <span class="k">import</span> KDTree, Voronoi, voronoi_plot_2d</div>
<div class="ln" style="top:98px"><span class="k">from</span> shapely.geometry <span class="k">import</span> Point, Polygon</div>
<div class="ln" style="top:111px">plt.style.use(<span class="s">&#x27;dark_background&#x27;</span>)</div>
<div class="ln" style="top:124px"></div>
<div class="ln" style="top:137px"></div>
<div class="ln" style="top:150px">file_paths = [<span class="s">&quot;/Users/juanitagomez/Documents/SpyderDocs/airports_CO.dat&quot;</span>,</div>
<div class="ln" style="top:163px">              <span class="s">&quot;/Users/juanitagomez/Documents/SpyderDocs/borders_CO.dat&quot;</span>]</div>
<div class="ln" style="top:176px"></div>
<div class="ln" style="top:189px">airports_CO = file_paths[<span class="n">0</span>]</div>
<div class="ln" style="top:202px">borders_CO=file_paths[<span class="n">1</span>]</div>
<div class="ln" style="top:215px"></div>
<div class="ln" style="top:228px"><span class="c"># %% Read files</span></div>
<div class="ln" style="top:241px"></div>
<div class="ln" style="top:254px">airports_Col = pd.read_csv(airports_CO, sep=<span class="s">r&quot;\s+&quot;</span>, names=[<span class="s">&quot;coord-y&quot;</span>, <span class="s">&quot;coord-x</span></div>
<div class="ln" style="top:267px">                           <span class="s">&#x27;Altitude&#x27;</span>, <span class="s">&quot;City&quot;</span>, <span class="s">&quot;Department&quot;</span>, <span class="s">&quot;Airport&quot;</span>])</div>
<div class="ln" style="top:280px">borders_Col = pd.read_csv(borders_CO, sep=<span class="s">r&quot;\s+&quot;</span>, names=[<span class="s">&quot;coord-y&quot;</span>, <span class="s">&quot;coord-x&quot;</span>]</div>
<div class="ln" style="top:293px"></div>
<div class="ln" style="top:306px"></div>
<div class="ln" style="top:319px"><span class="k">class</span> <span class="d">FlightOperations</span>:</div>
<div class="ln" style="top:332px"></div>
<div class="ln" style="top:345px">    <span class="k">def</span> <span class="d">__init__</span>(<span class="i">self</span>, airports, borders):</div>
<div class="ln" style="top:358px">        <span class="i">self</span>.airports = airports</div>
<div class="ln" style="top:371px">        <span class="i">self</span>.borders = borders</div>
<div class="ln" style="top:384px">        <span class="i">self</span>.points = <span class="i">self</span>.airports[[<span class="s">&#x27;coord-x&#x27;</span>, <span class="s">&#x27;coord-y&#x27;</span>]].to_numpy()</div>
<div class="ln" style="top:397px">        <span class="c">#self.hull = ConvexHull(self.points)</span></div>
<div class="ln" style="top:410px">        <span class="i">self</span>.vor = Voronoi(<span class="i">self</span>.points, )</div>
<div class="ln" style="top:423px"></div>
<div class="ln" style="top:436px">    <span class="k">def</span> <span class="dsel">sleep_wrapper</span>(<span class="i">self</span>):</div>
<div class="ln" style="top:449px">        time.sleep(<span class="n">0.003</span>)</div>
<div class="ln" style="top:462px"></div>
<div class="ln" style="top:475px"></div>
<div class="ln" style="top:488px">    <span class="k">def</span> <span class="d">plotAirports</span>(<span class="i">self</span>):</div>
<div class="ln" style="top:501px">        <span class="s">&quot;&quot;&quot; Plot map with airports &quot;&quot;&quot;</span></div>
<div class="ln" style="top:514px">        voronoi_plot_2d(<span class="i">self</span>.vor)</div>
<div class="ln" style="top:527px">        plt.plot(<span class="i">self</span>.borders[<span class="s">&#x27;coord-x&#x27;</span>], <span class="i">self</span>.borders[<span class="s">&#x27;coord-y&#x27;</span>])</div>
<div class="ln" style="top:540px">        <span class="c">#plt.show()</span></div>
<div class="ln" style="top:553px"></div>
<div class="ln" style="top:566px"></div>
<div class="ln" style="top:579px">    <span class="k">def</span> <span class="d">findNearestPointKD</span>(<span class="i">self</span>, point):</div>
<div class="ln" style="top:592px">        <span class="s">&quot;&quot;&quot; Find nearest airport given a point in any location using KDTree &quot;&quot;</span></div>
<div class="ln" style="top:605px">        points = <span class="i">self</span>.airports[[<span class="s">&#x27;coord-x&#x27;</span>, <span class="s">&#x27;coord-y&#x27;</span>]].to_numpy()</div>
<div class="ln" style="top:618px">        tree = KDTree(points)</div>
<div class="ln" style="top:631px">        distance, index = tree.query(point, k=<span class="n">1</span>)</div>
<div class="ln" style="top:644px">        nearest = <span class="i">self</span>.airports.iloc[index]</div>
</div>

<!-- vertical scrollbar -->
<div class="abs" style="left:948px;top:70px;width:18px;height:577px;background:#19232D"></div>
<div class="abs" style="left:950px;top:77px;width:12px;height:7px"><svg width="12" height="7" viewBox="0 0 12 7"><path d="M0.5 6.5 L6 0.5 L11.5 6.5 Z" fill="#455364"/></svg></div>
<div class="abs" style="left:950px;top:88px;width:12px;height:558px;border:1px solid #455364;border-radius:5px"></div>
<div class="abs" style="left:951.5px;top:152px;width:9px;height:197px;background:#60798B;border-radius:4px"></div>
<div class="abs" style="left:950px;top:650px;width:12px;height:7px"><svg width="12" height="7" viewBox="0 0 12 7"><path d="M0.5 0.5 L6 6.5 L11.5 0.5 Z" fill="#455364"/></svg></div>

<!-- horizontal scrollbar -->
<div class="abs" style="left:354px;top:646px;width:594px;height:18px;background:#19232D"></div>
<div class="abs" style="left:361px;top:648px;width:7px;height:12px"><svg width="7" height="12" viewBox="0 0 7 12"><path d="M6.5 0.5 L0.5 6 L6.5 11.5 Z" fill="#455364"/></svg></div>
<div class="abs" style="left:371px;top:648px;width:577px;height:12px;border:1px solid #455364;border-radius:5px"></div>
<div class="abs" style="left:372px;top:648px;width:411px;height:12px;background:#60798B;border:1px solid #4c5e70;border-radius:5px"></div>

</body></html>
